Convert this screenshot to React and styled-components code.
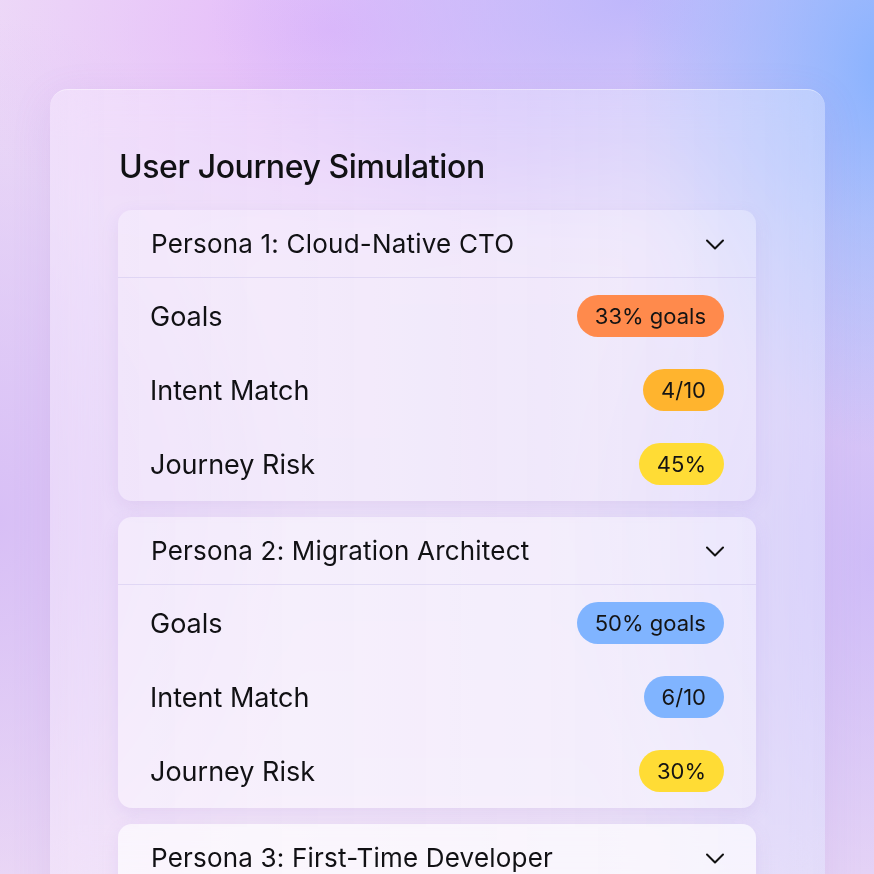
import React from "react";
import styled, { createGlobalStyle } from "styled-components";

const GlobalStyle = createGlobalStyle`
  html, body {
    margin: 0;
    padding: 0;
  }
  body {
    font-family: Inter, "Noto Sans", sans-serif;
    color: #111114;
  }
`;

const Page = styled.div`
  width: 874px;
  height: 874px;
  overflow: hidden;
  box-sizing: border-box;
  padding: 89px 49px 0 50px;
  background:
    radial-gradient(ellipse 260px 380px at 890px 70px, rgba(130, 176, 255, 0.95), rgba(130, 176, 255, 0) 100%),
    radial-gradient(ellipse 420px 260px at 630px 0px, rgba(186, 180, 252, 0.9), rgba(186, 180, 252, 0) 100%),
    radial-gradient(ellipse 380px 240px at 330px 30px, rgba(228, 184, 250, 1), rgba(228, 184, 250, 0) 100%),
    radial-gradient(ellipse 300px 500px at 0px 520px, rgba(214, 188, 246, 0.9), rgba(214, 188, 246, 0) 100%),
    radial-gradient(ellipse 300px 500px at 874px 560px, rgba(200, 180, 248, 0.8), rgba(200, 180, 248, 0) 100%),
    linear-gradient(180deg, #eedcf7 0%, #eadbf6 60%, #f0dff5 100%);
`;

const Panel = styled.section`
  box-sizing: border-box;
  width: 775px;
  min-height: 820px;
  padding: 57px 69px 0 68px;
  border-radius: 18px;
  background: linear-gradient(90deg, rgba(250, 240, 255, 0.45), rgba(236, 232, 255, 0.4) 60%, rgba(225, 232, 255, 0.45));
  border-top: 1px solid rgba(255, 255, 255, 0.4);
  box-shadow: 0 10px 40px rgba(150, 110, 200, 0.12);
  backdrop-filter: blur(20px);
`;

const Title = styled.h1`
  margin: 0 0 23px 1px;
  font-size: 32px;
  font-weight: 500;
  line-height: 40px;
  letter-spacing: -0.4px;
`;

const List = styled.div`
  display: flex;
  flex-direction: column;
  gap: 16px;
`;

const Card = styled.div`
  border-radius: 14px;
  background: rgba(255, 255, 255, ${(p) => p.$alpha});
  box-shadow: 0 6px 18px rgba(140, 100, 190, 0.12);
  overflow: hidden;
`;

const Header = styled.div`
  display: flex;
  align-items: center;
  justify-content: space-between;
  height: 67px;
  padding: 0 30px 0 33px;
  border-bottom: 1px solid rgba(200, 190, 235, 0.45);
  font-size: 26px;
  letter-spacing: 0.2px;
`;

const Body = styled.div`
  display: flex;
  flex-direction: column;
  padding-top: 1px;
`;

const Row = styled.div`
  display: flex;
  align-items: center;
  justify-content: space-between;
  height: 74px;
  padding: 0 32px 0 32px;
  font-size: 27px;
`;

const Badge = styled.span`
  display: inline-flex;
  align-items: center;
  height: 42px;
  padding: 0 18px;
  border-radius: 21px;
  background: ${(p) => p.$color};
  font-size: 22px;
  color: #141414;
`;

const Chevron = () => (
  <svg width="22" height="22" viewBox="0 0 22 22" fill="none" stroke="#111" strokeWidth="2" strokeLinecap="round" strokeLinejoin="round">
    <path d="M3 7.5l8 8 8-8" />
  </svg>
);

const personas = [
  {
    name: "Persona 1: Cloud-Native CTO",
    alpha: 0.28,
    goals: ["33% goals", "#ff8a4c"],
    intent: ["4/10", "#ffb42e"],
    risk: ["45%", "#ffdc35"],
  },
  {
    name: "Persona 2: Migration Architect",
    alpha: 0.42,
    goals: ["50% goals", "#80b4ff"],
    intent: ["6/10", "#80b4ff"],
    risk: ["30%", "#ffdc35"],
  },
  {
    name: "Persona 3: First-Time Developer",
    alpha: 0.65,
    goals: ["67% goals", "#80b4ff"],
    intent: ["7/10", "#80b4ff"],
    risk: ["20%", "#ffdc35"],
  },
];

const App = () => {
  return (
    <>
      <GlobalStyle />
      <Page>
        <Panel>
          <Title>User Journey Simulation</Title>
          <List>
            {personas.map((p) => (
              <Card key={p.name} $alpha={p.alpha}>
                <Header>
                  <span>{p.name}</span>
                  <Chevron />
                </Header>
                <Body>
                  <Row>
                    <span>Goals</span>
                    <Badge $color={p.goals[1]}>{p.goals[0]}</Badge>
                  </Row>
                  <Row>
                    <span>Intent Match</span>
                    <Badge $color={p.intent[1]}>{p.intent[0]}</Badge>
                  </Row>
                  <Row>
                    <span>Journey Risk</span>
                    <Badge $color={p.risk[1]}>{p.risk[0]}</Badge>
                  </Row>
                </Body>
              </Card>
            ))}
          </List>
        </Panel>
      </Page>
    </>
  );
};

export default App;
